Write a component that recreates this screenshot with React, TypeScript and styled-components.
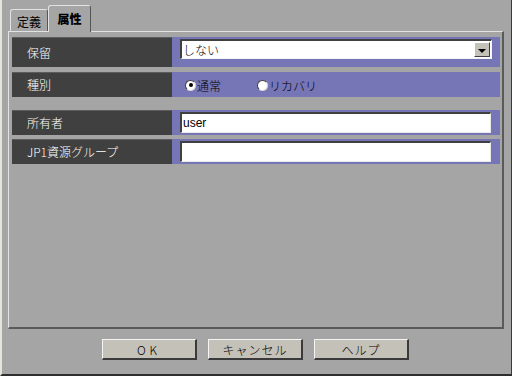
import React from "react";
import styled, { createGlobalStyle } from "styled-components";

const Global = createGlobalStyle`
  html, body { margin: 0; padding: 0; background: #a5a5a5; }
  * { box-sizing: border-box; }
  body { font-family: "Noto Sans CJK JP", "Liberation Sans", sans-serif; }
`;

const Window = styled.div`
  width: 512px;
  height: 376px;
  background: #a5a5a5;
  border-left: 2px solid #e6e4da;
  border-right: 1px solid #3a3a3a;
  border-bottom: 2px solid #2e2e2e;
  padding: 5px 7px 0 6px;
  display: flex;
  flex-direction: column;
  font-size: 12px;
`;

const TabStrip = styled.div`
  display: flex;
  align-items: flex-end;
  height: 26px;
  padding-left: 2px;
  position: relative;
  z-index: 1;
`;

const Tab = styled.div<{ $active?: boolean }>`
  width: ${(p) => (p.$active ? 43 : 38)}px;
  height: ${(p) => (p.$active ? 27 : 22)}px;
  margin-bottom: ${(p) => (p.$active ? -1 : 0)}px;
  background: #a5a5a5;
  border-top: 1px solid #e2e2e2;
  border-left: 1px solid #e2e2e2;
  border-right: 1px solid #555;
  border-top-left-radius: 3px;
  border-top-right-radius: 3px;
  display: flex;
  align-items: center;
  justify-content: center;
  padding-top: ${(p) => (p.$active ? 0 : 2)}px;
  color: #000;
  font-weight: ${(p) => (p.$active ? 900 : 400)};
  font-size: 12px;
  line-height: 1;
`;

const Panel = styled.div`
  height: 298px;
  border-top: 1px solid #e2e2e2;
  border-left: 1px solid #e2e2e2;
  border-right: 2px solid #5a5a5a;
  border-bottom: 2px solid #5a5a5a;
  padding: 5px 1px 0 3px;
  display: flex;
  flex-direction: column;
`;

const Row = styled.div<{ $h: number; $mt: number }>`
  display: grid;
  grid-template-columns: 160px 328px;
  height: ${(p) => p.$h}px;
  margin-top: ${(p) => p.$mt}px;
`;

const Label = styled.div`
  background: #404040;
  border-top: 1px solid #5c5c5c;
  color: #fff;
  display: flex;
  align-items: center;
  padding-left: 15px;
  font-size: 12px;
  font-weight: 300;
  line-height: 1;
`;

const Value = styled.div<{ $pt: number }>`
  background: #7675b6;
  padding: ${(p) => p.$pt}px 8px 0 8px;
  display: flex;
  align-items: flex-start;
`;

const Select = styled.div`
  width: 312px;
  height: 20px;
  background: #fff;
  border-top: 2px solid #404040;
  border-left: 2px solid #404040;
  border-bottom: 1px solid #f4f4f4;
  border-right: 1px solid #f4f4f4;
  display: flex;
  align-items: center;
  justify-content: space-between;
  padding-left: 1px;
  padding-right: 1px;
  color: #000;
  font-size: 12px;
  font-weight: 300;
`;

const DropButton = styled.div`
  width: 16px;
  height: 15px;
  background: #c4c1b8;
  border-top: 1px solid #fff;
  border-left: 1px solid #fff;
  border-right: 1px solid #404040;
  border-bottom: 1px solid #404040;
  display: flex;
  align-items: center;
  justify-content: center;
`;

const Arrow = styled.div`
  width: 0;
  height: 0;
  border-left: 4px solid transparent;
  border-right: 4px solid transparent;
  border-top: 4px solid #000;
  margin-top: 2px;
`;

const RadioGroup = styled.div`
  display: flex;
  align-items: center;
  height: 20px;
  padding-left: 5px;
`;

const RadioItem = styled.label<{ $w?: number }>`
  display: flex;
  align-items: center;
  width: ${(p) => (p.$w ? `${p.$w}px` : "auto")};
  color: #000;
  font-size: 12px;
  font-weight: 300;
  gap: 1px;
`;

const RadioCircle = styled.span<{ $on?: boolean }>`
  width: 11px;
  height: 11px;
  border-radius: 50%;
  background: #fff;
  border-top: 1px solid #404040;
  border-left: 1px solid #404040;
  border-right: 1px solid #d8d8d8;
  border-bottom: 1px solid #d8d8d8;
  display: inline-flex;
  align-items: center;
  justify-content: center;
  &::after {
    content: "";
    width: 4px;
    height: 4px;
    border-radius: 50%;
    background: ${(p) => (p.$on ? "#000" : "transparent")};
  }
`;

const TextBox = styled.div`
  width: 311px;
  height: 21px;
  background: #fff;
  border-top: 2px solid #404040;
  border-left: 2px solid #404040;
  border-bottom: 1px solid #e8e8e8;
  border-right: 1px solid #e8e8e8;
  padding-left: 1px;
  display: flex;
  align-items: center;
  color: #000;
  font-family: "Liberation Sans", sans-serif;
  font-size: 12px;
`;

const Footer = styled.div`
  display: flex;
  justify-content: center;
  gap: 11px;
  padding-top: 10px;
  padding-right: 1px;
`;

const Button = styled.div<{ $ls?: number }>`
  width: 95px;
  height: 21px;
  background: #c4c1b8;
  border-top: 1px solid #f4f4f4;
  border-left: 1px solid #f4f4f4;
  border-right: 2px solid #3a3a3a;
  border-bottom: 2px solid #3a3a3a;
  display: flex;
  align-items: center;
  justify-content: center;
  color: #000;
  font-size: 12px;
  font-weight: 300;
  letter-spacing: ${(p) => p.$ls ?? 1}px;
`;

export default function App() {
  return (
    <>
      <Global />
      <Window>
        <TabStrip>
          <Tab>定義</Tab>
          <Tab $active>属性</Tab>
        </TabStrip>
        <Panel>
          <Row $h={30} $mt={0}>
            <Label>保留</Label>
            <Value $pt={2}>
              <Select>
                <span>しない</span>
                <DropButton>
                  <Arrow />
                </DropButton>
              </Select>
            </Value>
          </Row>
          <Row $h={25} $mt={5}>
            <Label>種別</Label>
            <Value $pt={3}>
              <RadioGroup>
                <RadioItem $w={72}>
                  <RadioCircle $on />
                  通常
                </RadioItem>
                <RadioItem>
                  <RadioCircle />
                  リカバリ
                </RadioItem>
              </RadioGroup>
            </Value>
          </Row>
          <Row $h={25} $mt={13}>
            <Label>所有者</Label>
            <Value $pt={2}>
              <TextBox>user</TextBox>
            </Value>
          </Row>
          <Row $h={25} $mt={4}>
            <Label>JP1資源グループ</Label>
            <Value $pt={2}>
              <TextBox />
            </Value>
          </Row>
        </Panel>
        <Footer>
          <Button $ls={4}>OK</Button>
          <Button>キャンセル</Button>
          <Button>ヘルプ</Button>
        </Footer>
      </Window>
    </>
  );
}
